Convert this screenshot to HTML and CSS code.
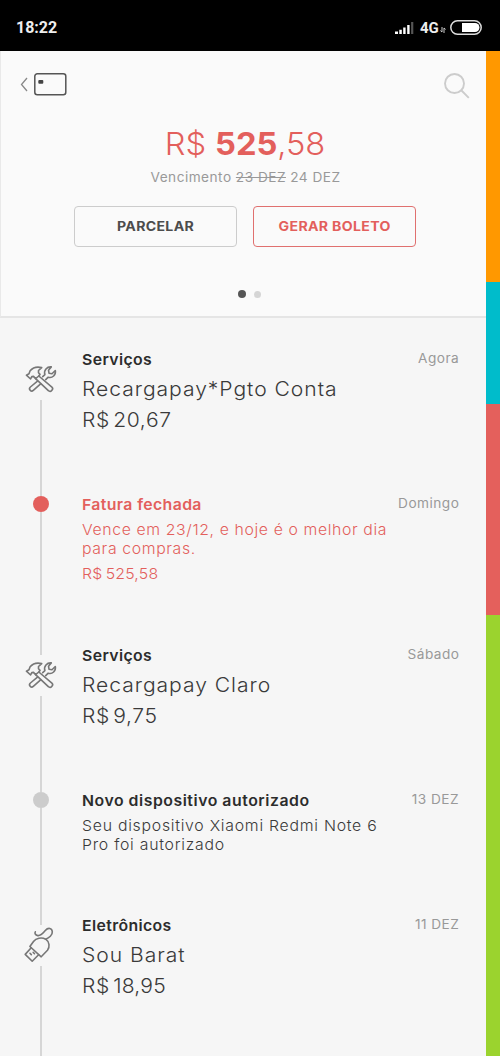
FILE: index.html
```html
<!DOCTYPE html>
<html lang="pt-BR">
<head>
<meta charset="utf-8">
<title>Fatura</title>
<link rel="stylesheet" href="styles.css">
</head>
<body>
<svg class="defs" aria-hidden="true">
  <symbol id="tools" viewBox="0 0 32 30">
    <path d="M13.8 12 26.9 23.2a2 2 0 0 1 .2 2.8l-.6.7a2 2 0 0 1-2.9.1L10.6 14.6"/>
    <path d="M13.8 12 10.6 14.6 8.5 12.4 6.8 12.6 5.6 15 1.4 11.2 4 9.8 5.1 6.8C8 3.4 12 2.4 16.7 3.6L13.5 6.5V8.7L15 10.4z"/>
    <path d="M12.5 17.2 5.4 23a2 2 0 0 0 2.9 3.4l7.3-6.5M17.7 12.6l2.2-2C18.5 6.4 22 2.4 26.3 2.9L23.5 6.2l.5 3 3 .5 3.3-3.2c.9 4.5-3 8-7.1 6.7l-2.5 2.4"/>
  </symbol>
  <symbol id="usb" viewBox="0 0 32 38">
    <path d="M5.9 20.5 9.5 15.5C12 12.2 17.5 11 21.7 13.2 25.8 16 25.8 21 23.5 24.2L17.2 30.8z"/>
    <path d="M7.2 21.8 1.2 28.4 8.2 35.2 14.6 28.7"/>
    <path d="M6 27.3l1.3 1.3M9.2 26.4l1.3 1.3"/>
    <path d="M21.7 13.2C25 12 28.6 9 28.3 5.8 28 2 24.2 1.2 21.3 4.5 19.3 6.8 17 10 13.8 9.6 11.2 9 10.5 7.2 11.3 5.8"/>
  </symbol>
</svg>
<header class="status">
  <time class="clock">18:22</time>
  <div class="indicators">
    <svg class="signal" viewBox="0 0 19 13"><path d="M0 10.5h3V13H0zM4.3 8.7h2.5V13H4.3zM8.2 6.5h2.4V13H8.2zM12.2 4h2.4v9h-2.4z" fill="#fff"/><path d="M16.1 1h2.2v12h-2.2z" fill="#555"/></svg>
    <span class="network">4G</span>
    <svg class="arrows" viewBox="0 0 6 6"><path d="M2 0v5L.4 3.6M4 6V1l1.6 1.4" fill="none" stroke="#ccc"/></svg>
    <svg class="battery" viewBox="0 0 32 15"><rect x=".8" y=".8" width="30.4" height="13.4" rx="6.7" fill="none" stroke="#ddd" stroke-width="1.5"/><path d="M12 3h13a4.5 4.5 0 0 1 0 9H12z" fill="#fff"/></svg>
  </div>
</header>
<div class="screen">
  <main class="page">
    <section class="summary">
      <nav class="toolbar">
        <svg class="back" viewBox="0 0 47 24"><path d="M7 6 1.5 12.5 7 19" fill="none" stroke="#888" stroke-width="1.3"/><rect x="14.8" y="1.8" width="31" height="21" rx="2.5" fill="none" stroke="#555" stroke-width="1.5"/><rect x="18.3" y="8" width="5" height="3.7" rx="1" fill="#444"/></svg>
        <svg class="search" viewBox="0 0 26 26"><circle cx="10.5" cy="10.5" r="9.5"/><path d="m17.5 17.5 7.3 7.3"/></svg>
      </nav>
      <div class="balance">
        <h1 class="total">R$ <b>525</b>,58</h1>
        <p class="due">Vencimento <s>23 DEZ</s> 24 DEZ</p>
        <div class="actions">
          <button class="button"><span class="label">PARCELAR</span></button>
          <button class="button button-primary"><span class="label">GERAR BOLETO</span></button>
        </div>
      </div>
      <div class="pager"><i class="page-dot current"></i><i class="page-dot"></i></div>
    </section>
    <section class="timeline">
      <article class="event first">
        <div class="rail"><svg class="icon"><use href="#tools"/></svg></div>
        <div class="body"><h2 class="category">Serviços</h2><p class="merchant">Recargapay*Pgto Conta</p><p class="amount">R$<span class="figure">20,67</span></p></div>
        <time class="date">Agora</time>
      </article>
      <article class="event closed">
        <div class="rail plain"><i class="marker"></i></div>
        <div class="body"><h2 class="category">Fatura fechada</h2><p class="note closing">Vence em 23/12, e hoje é o melhor dia<br>para compras.</p><p class="closed-amount">R$<span class="figure">525,58</span></p></div>
        <time class="date">Domingo</time>
      </article>
      <article class="event">
        <div class="rail"><svg class="icon"><use href="#tools"/></svg></div>
        <div class="body"><h2 class="category">Serviços</h2><p class="merchant">Recargapay Claro</p><p class="amount">R$<span class="figure">9,75</span></p></div>
        <time class="date">Sábado</time>
      </article>
      <article class="event device">
        <div class="rail plain"><i class="marker"></i></div>
        <div class="body"><h2 class="category long">Novo dispositivo autorizado</h2><p class="note">Seu dispositivo Xiaomi Redmi Note 6<br>Pro foi autorizado</p></div>
        <time class="date">13 DEZ</time>
      </article>
      <article class="event">
        <div class="rail"><svg class="icon usb"><use href="#usb"/></svg></div>
        <div class="body"><h2 class="category">Eletrônicos</h2><p class="merchant">Sou Barat</p><p class="amount">R$<span class="figure tight">18,95</span></p></div>
        <time class="date">11 DEZ</time>
      </article>
    </section>
  </main>
  <aside class="limit-bar"><i class="orange"></i><i class="teal"></i><i class="red"></i><i class="green"></i></aside>
</div>
</body>
</html>
```
FILE: styles.css
```css
* { box-sizing: border-box; }
body { margin: 0; width: 500px; height: 1056px; overflow: hidden; background: #f6f6f6; font-family: Inter, sans-serif; color: #3a3a3a; }
h1, h2, p { margin: 0; font-weight: 400; white-space: nowrap; }
.defs { position: absolute; width: 0; height: 0; }
.status { height: 51px; background: #000; color: #eee; display: flex; justify-content: space-between; align-items: center; padding: 4px 18px 0 16px; font-family: Roboto, sans-serif; }
.clock { font-size: 16px; font-weight: 700; }
.indicators { display: flex; align-items: center; }
.signal { width: 19px; height: 13px; margin-right: 6px; }
.network { font-size: 15px; font-weight: 700; width: 19px; }
.arrows { width: 6px; height: 6px; margin: 5px 4px 0 1px; }
.battery { width: 32px; height: 15px; }
.screen { display: flex; height: 1005px; }
.page { flex: 1; }
.summary { height: 267px; background: #fafafa; border-bottom: 2px solid #e5e5e5; border-left: 1px solid #e9e9e9; display: flex; flex-direction: column; align-items: center; }
.toolbar { width: 100%; display: flex; justify-content: space-between; padding: 21px 16px 0 19px; height: 74px; }
.back { width: 47px; height: 24px; }
.search { width: 26px; height: 26px; margin-top: 1px; fill: none; stroke: #ccc; stroke-width: 1.9; }
.balance { padding-left: 3px; display: flex; flex-direction: column; align-items: center; }
.total { color: #e35f5c; font-size: 31px; line-height: 38px; font-weight: 350; letter-spacing: -.1px; transform: scaleX(1.055); }
.total b { font-weight: 700; }
.due { color: #999; font-size: 13px; line-height: 18px; margin-top: 5px; letter-spacing: .45px; transform: scaleX(1.05); }
.actions { display: flex; gap: 16px; margin-top: 20px; }
.button { width: 163px; height: 41px; padding: 0 0 2px; border: 1.5px solid #ccc; border-radius: 4px; background: transparent; color: #4c4c4c; font: 700 13px Inter, sans-serif; letter-spacing: .3px; }
.label { display: inline-block; transform: scaleX(1.085); }
.button-primary { border-color: #e0706f; color: #e35f5c; }
.pager { display: flex; align-items: center; gap: 8px; margin-top: 43px; padding-left: 12px; }
.page-dot { width: 7px; height: 7px; border-radius: 50%; background: #d5d5d5; }
.page-dot.current { width: 8px; height: 8px; background: #555; }
.timeline { padding-top: 27px; }
.event { display: grid; grid-template-columns: 82px 1fr auto; height: 145px; padding-right: 27px; }
.event.closed { height: 151px; }
.event.device { height: 125px; }
.rail { display: flex; flex-direction: column; align-items: center; }
.rail::before { content: ""; width: 2px; height: 14px; background: #d6d6d6; }
.rail::after { content: ""; width: 2px; flex: 1; background: #d6d6d6; }
.first .rail::before { visibility: hidden; }
.rail.plain::before { height: 6px; }
.icon { width: 32px; height: 30px; margin: 5px 0 6px; fill: none; stroke: #777; stroke-width: 1.6; stroke-linejoin: round; stroke-linecap: round; }
.icon.usb { height: 38px; margin: 1px 2px 2px 0; }
.marker { width: 16px; height: 16px; border-radius: 50%; background: #ccc; }
.closed .marker { background: #e35f5c; }
.body { min-width: 0; transform: scaleX(1.055); transform-origin: left; }
.category { font-size: 15px; line-height: 20px; font-weight: 600; letter-spacing: .35px; padding-top: 5px; color: #2c2c2c; }
.category.long { letter-spacing: .5px; }
.merchant { font-size: 20px; line-height: 26px; margin-top: 6px; letter-spacing: .9px; font-weight: 350; }
.amount { font-size: 20px; line-height: 26px; margin-top: 5px; letter-spacing: .6px; font-weight: 350; }
.figure { margin-left: 3px; }
.figure.tight { letter-spacing: .2px; }
.note { font-size: 15px; line-height: 18.5px; margin-top: 6px; letter-spacing: .7px; font-weight: 350; }
.note.closing { letter-spacing: .58px; }
.closed-amount { font-size: 15px; line-height: 20px; margin-top: 6px; letter-spacing: .2px; font-weight: 350; }
.closed .body, .closed .category { color: #e35f5c; }
.date { white-space: nowrap; font-size: 13px; line-height: 18px; padding-top: 4px; letter-spacing: .45px; margin-right: -.5px; color: #999; transform: scaleX(1.05); transform-origin: right; }
.limit-bar { width: 14px; display: flex; flex-direction: column; }
.orange { height: 230.5px; background: #ff9800; }
.teal { height: 122px; background: #00bccb; }
.red { height: 211.5px; background: #e4605c; }
.green { flex: 1; background: #9bd32e; }
```
